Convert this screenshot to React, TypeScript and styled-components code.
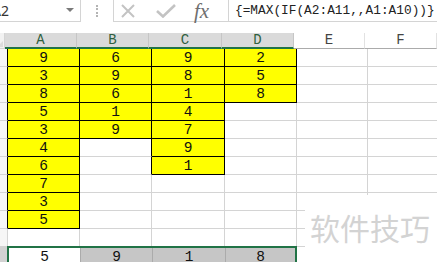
import React from 'react';
import styled, { createGlobalStyle } from 'styled-components';

const GlobalStyle = createGlobalStyle`
  html, body {
    margin: 0;
    padding: 0;
    background: #ffffff;
    overflow: hidden;
  }
  body {
    font-family: "Liberation Mono", "Noto Sans CJK SC", monospace;
  }
`;

const COLS = ['A', 'B', 'C', 'D', 'E', 'F'];
const WIDTHS = [72, 72, 73, 72, 71, 72];
const SELECTED = [true, true, true, true, false, false];

const DATA: (number | null)[][] = [
  [9, 3, 8, 5, 3, 4, 6, 7, 3, 5],
  [6, 9, 6, 1, 9],
  [9, 8, 1, 4, 7, 9, 1],
  [2, 5, 8],
  [],
  [],
];

const ROWS = 11;
const RESULT = [5, 9, 1, 8];

const valueAt = (r: number, c: number) => {
  if (c < 0 || c >= DATA.length) return null;
  const v = DATA[c][r];
  return v === undefined ? null : v;
};
const isYellow = (r: number, c: number) => valueAt(r, c) !== null;

const Page = styled.div`
  position: relative;
  width: 437px;
  height: 262px;
  overflow: hidden;
`;

/* ---------- formula bar ---------- */

const FormulaBar = styled.div`
  display: flex;
  align-items: stretch;
  height: 22px;
`;

const NameBox = styled.div`
  width: 81px;
  box-sizing: border-box;
  border-right: 1px solid #d4d4d4;
  border-bottom: 1px solid #d4d4d4;
  display: flex;
  align-items: center;
  justify-content: space-between;
  padding-right: 6px;
  overflow: hidden;
`;

const NameText = styled.span`
  font-family: "Noto Sans", "DejaVu Sans", sans-serif;
  font-size: 14px;
  color: #333;
  margin-left: -8px;
`;

const DropArrow = styled.span`
  width: 0;
  height: 0;
  border-left: 4px solid transparent;
  border-right: 4px solid transparent;
  border-top: 4px solid #7a7a7a;
  margin-top: -2px;
`;

const Grip = styled.div`
  width: 32px;
  display: flex;
  justify-content: center;
  align-items: center;
  &::before {
    content: '';
    height: 12px;
    border-left: 2px dotted #b4b4b4;
  }
`;

const Buttons = styled.div`
  width: 115px;
  box-sizing: border-box;
  border-left: 1px solid #d4d4d4;
  border-bottom: 1px solid #d4d4d4;
  display: flex;
  align-items: center;
  padding-left: 6px;
  gap: 20px;
`;

const Fx = styled.span`
  font-family: "Liberation Serif", serif;
  font-style: italic;
  font-size: 21px;
  color: #6f6f6f;
  margin-left: -2px;
  line-height: 20px;
`;

const Formula = styled.div`
  flex: 1;
  border-left: 1px solid #d4d4d4;
  border-bottom: 1px solid #d4d4d4;
  display: flex;
  align-items: center;
  padding-left: 6px;
  font-family: "Liberation Mono", monospace;
  font-size: 12.8px;
  color: #222;
  white-space: nowrap;
`;

/* ---------- sheet ---------- */

const Sheet = styled.div`
  margin-top: 11px;
  display: flex;
  flex-direction: column;
`;

const Row = styled.div`
  display: flex;
  height: 18px;
`;

const HeadRow = styled.div`
  display: flex;
  height: 16px;
`;

const Corner = styled.div`
  width: 8px;
  box-sizing: border-box;
  background: #f2f2f2;
  border-right: 1px solid #d4d4d4;
  border-bottom: 1px solid #d4d4d4;
  position: relative;
  overflow: hidden;
  &::after {
    content: '';
    position: absolute;
    right: 1px;
    bottom: 1px;
    border-left: 6px solid transparent;
    border-bottom: 6px solid #dcdcdc;
  }
`;

const ColHead = styled.div<{ $w: number; $sel: boolean }>`
  width: ${p => p.$w}px;
  flex: none;
  box-sizing: border-box;
  background: ${p => (p.$sel ? '#dadada' : '#ffffff')};
  color: ${p => (p.$sel ? '#2f5f3f' : '#444444')};
  border-right: 1px solid ${p => (p.$sel ? '#c6c6c6' : '#e2e2e2')};
  border-bottom: ${p => (p.$sel ? '2px solid #217346' : '1px solid #ababab')};
  font-size: 14px;
  line-height: 15px;
  text-align: center;
`;

const RowHead = styled.div<{ $dark: boolean; $sel?: boolean }>`
  width: 8px;
  flex: none;
  box-sizing: border-box;
  background: ${p => (p.$sel ? '#d2d2d2' : '#f6f6f6')};
  border-right: 1px solid ${p => (p.$dark ? '#000' : '#d4d4d4')};
  border-bottom: 1px solid #d4d4d4;
`;

const Cell = styled.div<{ $w: number; $fill: boolean; $right: boolean; $bottom: boolean }>`
  width: ${p => p.$w}px;
  flex: none;
  box-sizing: border-box;
  background: ${p => (p.$fill ? '#ffff00' : '#ffffff')};
  border-right: 1px solid ${p => (p.$right ? '#000' : '#d4d4d4')};
  border-bottom: 1px solid ${p => (p.$bottom ? '#000' : '#d4d4d4')};
  font-size: 14.5px;
  line-height: 18px;
  color: #111;
  text-align: center;
`;

const ResultRow = styled.div`
  display: flex;
  height: 20px;
  margin-top: -1px;
`;

const Selection = styled.div`
  display: flex;
  margin-left: -1px;
  border: 2px solid #217346;
  border-bottom: none;
`;

const ResultCell = styled.div<{ $w: number; $hl: boolean }>`
  width: ${p => p.$w}px;
  flex: none;
  box-sizing: border-box;
  background: ${p => (p.$hl ? '#c6c6c6' : '#ffffff')};
  border-left: ${p => (p.$hl ? '1px solid #ababab' : 'none')};
  font-size: 14.5px;
  line-height: 19px;
  color: #111;
  text-align: center;
`;

const Watermark = styled.div`
  position: absolute;
  left: 305px;
  top: 195px;
  right: 0;
  bottom: 0;
  background: #ffffff;
  padding: 16px 0 0 5px;
  font-family: "Noto Sans CJK SC", sans-serif;
  font-size: 30px;
  line-height: 32px;
  color: #d3d3d3;
  white-space: nowrap;
`;

const CrossIcon = () => (
  <svg width="16" height="16" viewBox="0 0 16 16">
    <path d="M2 2 L14 14 M14 2 L2 14" stroke="#c3c3c3" strokeWidth="2" fill="none" />
  </svg>
);

const CheckIcon = () => (
  <svg width="20" height="14" viewBox="0 0 20 14">
    <path d="M1 7 L7 12.5 L19 1" stroke="#c3c3c3" strokeWidth="2.6" fill="none" />
  </svg>
);

export default function App() {
  return (
    <Page>
      <GlobalStyle />
      <FormulaBar>
        <NameBox>
          <NameText>A2</NameText>
          <DropArrow />
        </NameBox>
        <Grip />
        <Buttons>
          <CrossIcon />
          <CheckIcon />
          <Fx>fx</Fx>
        </Buttons>
        <Formula>{'{=MAX(IF(A2:A11,,A1:A10))}'}</Formula>
      </FormulaBar>

      <Sheet>
        <HeadRow>
          <Corner />
          {COLS.map((c, i) => (
            <ColHead key={c} $w={WIDTHS[i]} $sel={SELECTED[i]}>
              {c}
            </ColHead>
          ))}
        </HeadRow>

        {Array.from({ length: ROWS }).map((_, r) => (
          <Row key={r}>
            <RowHead $dark={isYellow(r, 0)} />
            {COLS.map((c, i) => (
              <Cell
                key={c}
                $w={WIDTHS[i]}
                $fill={isYellow(r, i)}
                $right={isYellow(r, i) || isYellow(r, i + 1)}
                $bottom={isYellow(r, i) || isYellow(r + 1, i)}
              >
                {valueAt(r, i)}
              </Cell>
            ))}
          </Row>
        ))}

        <ResultRow>
          <RowHead $dark={false} $sel />
          <Selection>
            {RESULT.map((v, i) => (
              <ResultCell key={i} $w={i === 3 ? WIDTHS[i] - 2 : WIDTHS[i] - (i === 0 ? 1 : 0)} $hl={i > 0}>
                {v}
              </ResultCell>
            ))}
          </Selection>
        </ResultRow>
      </Sheet>

      <Watermark>软件技巧</Watermark>
    </Page>
  );
}
